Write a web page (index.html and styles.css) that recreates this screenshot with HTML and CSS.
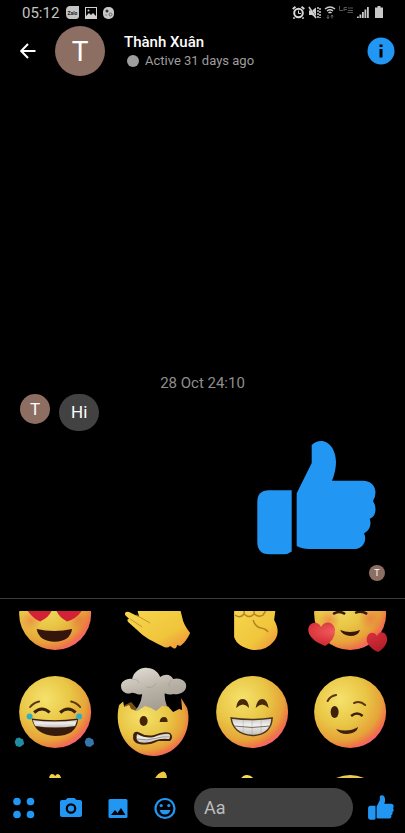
FILE: index.html
```html
<!DOCTYPE html>
<html lang="en">
<head>
<meta charset="utf-8">
<meta name="viewport" content="width=device-width, initial-scale=1">
<title>Thành Xuân</title>
<link rel="stylesheet" href="styles.css">
</head>
<body>
<svg class="defs" width="0" height="0" aria-hidden="true">
  <defs>
    <radialGradient id="face" cx="0.36" cy="0.32" r="0.72">
      <stop offset="0" stop-color="#f5e26c"/>
      <stop offset="0.5" stop-color="#e9c645"/>
      <stop offset="0.8" stop-color="#e6a339"/>
      <stop offset="0.95" stop-color="#f0704a"/>
      <stop offset="1" stop-color="#f9627a"/>
    </radialGradient>
    <linearGradient id="hand" x1="0" y1="0" x2="1" y2="1">
      <stop offset="0" stop-color="#f6d850"/>
      <stop offset="0.65" stop-color="#f0c53b"/>
      <stop offset="1" stop-color="#ef8a3c"/>
    </linearGradient>
    <radialGradient id="blush">
      <stop offset="0" stop-color="#ec6044" stop-opacity="0.5"/>
      <stop offset="1" stop-color="#ec6044" stop-opacity="0"/>
    </radialGradient>
    <radialGradient id="heart" cx="0.35" cy="0.3" r="0.8">
      <stop offset="0" stop-color="#f0605c"/>
      <stop offset="0.5" stop-color="#d7303a"/>
      <stop offset="1" stop-color="#b51f2b"/>
    </radialGradient>
    <linearGradient id="cloud" gradientUnits="userSpaceOnUse" x1="40" y1="5" x2="52" y2="48">
      <stop offset="0" stop-color="#dcd7ce"/>
      <stop offset="0.5" stop-color="#b9b2a7"/>
      <stop offset="1" stop-color="#a39b8e"/>
    </linearGradient>
    <linearGradient id="teeth" x1="0" y1="0" x2="0" y2="1">
      <stop offset="0" stop-color="#c9c6c2"/>
      <stop offset="0.4" stop-color="#f1efec"/>
      <stop offset="1" stop-color="#c4c0bb"/>
    </linearGradient>
    <symbol id="thumb" viewBox="0 0 120 114">
      <path d="M12 49.300H34.700V110.500Q31 113.300 27 113.300H12Q.3 113 .3 101V61Q.3 49.300 12 49.300Z"/>
      <path d="M39.700 52.300L54.700 22V4Q59 0 64 0C73 0 79 10 79 20.700Q79 30 75 39.700H106C114 39.700 118.500 45 118.500 51.500Q118.500 56 116 60Q118.700 64 118.500 68.500C118.300 74 116 76.500 112.700 77.700C115 84 112 90 107 92.300C110.500 99 106 108 98 108H52Q45 108 39.700 105Z"/>
    </symbol>
  </defs>
</svg>

<div class="status">
  <span class="status-time">05:12</span>
  <svg class="note-icon" width="13" height="13" viewBox="0 0 13 13"><path d="M3 0H13V10Q13 13 10 13H3Q0 12 0 8V4Q0 1 3 0Z" fill="#c4c4c4"/><text x="6.500" y="8.500" class="zalo">Zalo</text></svg>
  <svg class="note-icon" width="12" height="12" viewBox="0 0 12 12"><path fill="#d0d0d0" fill-rule="evenodd" d="M0 0H12V12H0ZM1 1V9L4 6L6 8L8 6L11 9V1Z"/><circle cx="3.500" cy="3.500" r="1" fill="#d0d0d0"/></svg>
  <svg class="note-icon" width="11" height="12" viewBox="0 0 11 12"><rect width="11" height="12" rx="5" fill="#c8c8c8"/><circle cx="4" cy="4" r="1.500" fill="#333"/><circle cx="7.500" cy="7.500" r="1.500" fill="none" stroke="#666"/><circle cx="3" cy="8" r="1" fill="#999"/></svg>
  <div class="status-right">
    <svg width="13" height="13" viewBox="0 0 13 13" fill="none" stroke="#d8d8d8"><circle cx="6.500" cy="7" r="4.300" stroke-width="2"/><path stroke-width="1.800" d="M.7 3L3.500 .8M12.300 3L9.500 .8M2.500 11.500L1.500 12.700M10.500 11.500L11.500 12.700"/><path d="M6.500 4.500V7.500H9"/></svg>
    <svg width="13" height="13" viewBox="0 0 13 13"><path fill="#d0d0d0" d="M1 4.500H4L8 1.500V12L4 9H1Z"/><path d="M2 1.500L9 12.500" stroke="#000"/><path d="M1 1L8 12" stroke="#d0d0d0" stroke-width="1.500"/><path d="M10 1V12M12 2V12" stroke="#c8c8c8" stroke-width="1.500" stroke-dasharray="2 1"/></svg>
    <svg width="12" height="13" viewBox="0 0 12 13" fill="none" stroke="#d0d0d0"><path stroke-width="1.300" d="M1 3Q6 -1 11 3M3 5Q6 2.500 9 5M4.500 7Q6 5.500 7.500 7"/><path stroke="#666" d="M4 9V12.500M2.800 11L4 12.500L5.200 11M8 12.500V9M6.800 10.500L8 9L9.200 10.500"/></svg>
    <svg width="15" height="13" viewBox="0 0 15 13" fill="none" stroke="#555"><path d="M.5 0V4.500H4M5 5V1.500H8M5 3.500H8M9 2H14M9 4.500H14M8.500 6.500H14"/></svg>
    <svg width="12" height="13" viewBox="0 0 12 13"><path fill="#c8c8c8" d="M0 10.500H1.800V12H0ZM2.500 8.500H4.300V12H2.500ZM5 6H6.800V12H5ZM7.500 3.500H9.300V12H7.500ZM10 1H11.800V12H10Z"/></svg>
    <svg class="battery" width="8" height="13" viewBox="0 0 8 13"><path fill="#c8c8c8" d="M2.500 0H5.500V1.500H8V12H0V1.500H2.500Z"/></svg>
  </div>
</div>

<header class="header">
  <button class="icon-btn" aria-label="Back"><svg width="16" height="16" viewBox="0 0 16 16" fill="none" stroke="#fff" stroke-width="2"><path d="M15.500 8H1.500M8 1L1.200 8L8 15"/></svg></button>
  <span class="avatar avatar-lg">T</span>
  <div class="who">
    <h1 class="name">Thành Xuân</h1>
    <p class="active"><span class="dot"></span>Active 31 days ago</p>
  </div>
  <button class="icon-btn info" aria-label="Conversation info"><svg width="28" height="28" viewBox="0 0 28 28"><circle cx="14" cy="14" r="13.500" fill="#2196f3"/><path fill="#000" d="M12.500 7.500H15.500V10H12.500ZM12.500 12H15.500V20.500H12.500Z"/></svg></button>
</header>

<main class="chat">
  <time class="date">28 Oct 24:10</time>
  <div class="received">
    <span class="avatar avatar-md">T</span>
    <p class="bubble">Hi</p>
  </div>
  <svg class="big-thumb" width="120" height="114" role="img" aria-label="Thumbs up"><use href="#thumb"/></svg>
  <span class="avatar avatar-sm">T</span>
</main>

<section class="tray" aria-label="Stickers">
  <div class="tray-view">
    <div class="stickers">
      <svg viewBox="0 0 98 98"><circle cx="49" cy="49" r="36" fill="url(#face)"/><circle cx="25" cy="55" r="11" fill="url(#blush)"/><circle cx="73" cy="55" r="11" fill="url(#blush)"/><path fill="#d32233" d="M18 40H47Q46 51 34 56.500Q25 53 18 40ZM49 40H79Q73 53 61 56.500Q50 51 49 40Z"/><path fill="#35150b" d="M30.500 64Q48 68 66 64Q64 76.500 48.500 76.700Q33 76.500 30.500 64Z"/></svg>
      <svg viewBox="0 0 98 98"><path fill="url(#hand)" d="M33 44H76L78 52Q79 59 86 68Q82 77 76 81L73 80Q72 85 69 83L66 81Q63 84 58 81C48 76 41 73 33 65L24 57Q22 54 25 54L21 50Q20 46 25 47L35 52Z"/><path d="M26 54L38 62M32 50L46 58" fill="none" stroke="#c9942a"/></svg>
      <svg viewBox="0 0 98 98"><path fill="url(#hand)" d="M31 40H73L71 55Q78 67 71 76Q63 86 50 85Q34 82 31 72Z"/><path fill="none" stroke="#b58325" stroke-width="1.500" d="M32 50Q37 54 41 49Q46 54 51 49Q56 53 60 50M41 49V45M51 49V45M60 50L63 45"/><path fill="none" stroke="#b58325" stroke-width="1.500" d="M50 55Q52 62 58 63Q63 64 65 67"/></svg>
      <svg viewBox="0 0 98 98"><circle cx="49" cy="49" r="36" fill="url(#face)"/><circle cx="28" cy="55" r="11" fill="url(#blush)"/><circle cx="69" cy="53" r="12" fill="url(#blush)"/><path d="M32 49Q38 45 44 49M54 48Q60 45 66 49" fill="none" stroke="#35180b" stroke-width="2.500"/><path fill="#35180b" d="M39 65Q49 69 59 65Q57 71 49 71Q41 70 39 65Z"/><path fill="url(#heart)" d="M20 62C16 54 4 58 8 69Q11 76 24 81Q34 75 34 65C33 56 23 55 20 62ZM76 71C71 63 62 71 67 79Q70 84 77 87Q84 83 86 76C87 67 78 64 76 71Z"/></svg>

      <svg viewBox="0 0 98 98"><circle cx="49" cy="49" r="36" fill="url(#face)"/><path fill="none" stroke="#59380e" stroke-width="2" stroke-linecap="round" d="M24 44Q27 40 33 38.500M65 38.500Q71 40 74 44"/><path fill="none" stroke="#3b200b" stroke-width="3" d="M28 49.500Q36 42.500 43.500 49.500M54 49.500Q62 42.500 69.500 49.500"/><path fill="#381b0c" d="M25.500 55.500Q48 59 72 55.500Q71 73 49 73Q29 72 25.500 55.500Z"/><path fill="url(#teeth)" d="M26.500 57Q48 60 71 57L69 63Q49 66 29 63Z"/><circle cx="23.500" cy="53.500" r="3" fill="#35adc0"/><circle cx="73" cy="53.500" r="3" fill="#35adc0"/><path fill="#208da2" d="M13 74.500L17 76.500L18 81L14 84L10 83L8.500 79L10 75.500Z"/><path fill="#3676ab" d="M83 74.500L87 76.500L88 81L84 84L80 83L78.500 79L80 75.500Z"/></svg>
      <svg viewBox="0 0 98 98"><path fill="#775017" d="M19 43L27 39L34 47H27Z"/><path fill="url(#cloud)" d="M38 27H61Q59 36 65 48H31Q39 38 38 27Z"/><path fill="url(#cloud)" d="M28 16C30 8 37 4 43 5C51 5 55 11 56 14C62 10 67 12 69 16C76 14 83 18 82 24C81 30 74 32 69 31C63 33 60 29 57 30C51 36 44 33 40 30C34 34 31 29 27 30C22 32 17 28 17 24C16 19 22 15 28 16Z"/><path fill="none" stroke="#97918a" stroke-opacity="0.5" d="M27 17Q33 15 35 20M42 24Q49 26 52 20M68 17Q63 20 66 24"/><path fill="url(#face)" d="M19 38.500L20 44L25 42L27 46L33 48L41 43L47 45L52 48L58 43L64 43.500L69 49L75 46L78 47L77 35L80 40L83 45C89 66 75 93 49 93C22 92 9 65 15 42Z"/><ellipse cx="39.500" cy="58" rx="4" ry="5" fill="#472607"/><path fill="#472607" d="M55.500 59Q56 54 60 54Q63.500 54 63.500 59Z"/><path fill="#3c210d" d="M29 72Q30 68 34 69Q42 74 50 72Q60 68 66 70Q70 74 66 78Q60 78 54 78Q45 83 35 81Q28 80 29 72Z"/><path fill="url(#teeth)" d="M33 71Q42 76 50 74Q60 70 65 71Q67 73 65 76Q58 75 52 77Q43 81 35 79Q31 76 33 71Z"/><path stroke="#9b948b" fill="none" d="M33 76Q43 78 51 75.500Q59 73 66 74"/></svg>
      <svg viewBox="0 0 98 98"><circle cx="49" cy="49" r="36" fill="url(#face)"/><path fill="#492907" d="M33 45Q34 36 39.500 36Q45 36 46 45Q40 38 33 45ZM52.500 45Q54 36 59 36Q64 36 65.500 45Q59 38 52.500 45Z"/><path fill="url(#teeth)" stroke="#4c351f" stroke-width="1.500" d="M28 55Q49 58 69 55Q68 72 49 72.500Q30 71 28 55Z"/><path fill="none" stroke="#77706a" d="M31 63Q49 66 67 63"/><path fill="none" stroke="#77706a" stroke-opacity="0.25" d="M40 57V71M49 57V72M58 57V71"/></svg>
      <svg viewBox="0 0 98 98"><circle cx="49" cy="49" r="36" fill="url(#face)"/><path fill="none" stroke="#593513" stroke-width="2" stroke-linecap="round" d="M26.500 38Q29 33 35 32M53 40Q59 37.500 64 42"/><ellipse cx="33.500" cy="49" rx="4" ry="6" fill="#3e210d"/><path fill="none" stroke="#3e210d" stroke-width="2.500" d="M50 53Q56 48 61.500 53"/><path fill="#3e210d" d="M35 66Q47 70 57 64Q56 70 46 71Q38 71 35 66Z"/></svg>

      <svg viewBox="0 0 98 98"><path fill="#efcf4d" d="M42.500 20Q43 13 46 13Q48 13 49 15Q50 13 52 13Q55 14 55.500 20Z"/></svg>
      <svg viewBox="0 0 98 98"><path fill="#efc845" d="M50 19Q53 12 59 10.500Q63 11 63 20H50Z"/></svg>
      <svg viewBox="0 0 98 98"><path fill="#f5dc5a" d="M36 20Q40 13 44 14Q49 14 52 20Z"/></svg>
      <svg viewBox="0 0 98 98"><circle cx="49" cy="49" r="35" fill="#e9ca52"/></svg>
    </div>
  </div>
</section>

<footer class="composer">
  <div class="tools">
    <button class="icon-btn" aria-label="More apps"><svg width="24" height="24" viewBox="0 0 24 24" fill="#2196f3"><circle cx="5" cy="5.500" r="3.800"/><circle cx="18.500" cy="5.500" r="3.800"/><circle cx="5" cy="18.500" r="3.800"/><circle cx="18.500" cy="18.500" r="3.800"/></svg></button>
    <button class="icon-btn" aria-label="Camera"><svg width="24" height="24" viewBox="0 0 24 24"><path fill="#2196f3" d="M8.500 2H15.500L17.500 4H21Q23 4 23 6V19Q23 21 21 21H3Q1 21 1 19V6Q1 4 3 4H6.500Z"/><circle cx="12" cy="12.500" r="4.200" fill="#2196f3" stroke="#000" stroke-width="2.200"/></svg></button>
    <button class="icon-btn" aria-label="Gallery"><svg width="24" height="24" viewBox="0 0 24 24"><rect x="2.500" y="3" width="19" height="19" rx="1.500" fill="#2196f3"/><path d="M5 19L9 14L11.500 17L15 12L19.500 19Z"/></svg></button>
    <button class="icon-btn" aria-label="Stickers"><svg width="24" height="24" viewBox="0 0 24 24"><circle cx="12" cy="12.500" r="9.500" fill="none" stroke="#2196f3" stroke-width="2.200"/><circle cx="8.200" cy="9.500" r="1.600" fill="#2196f3"/><circle cx="15.800" cy="9.500" r="1.600" fill="#2196f3"/><path fill="#2196f3" d="M6.500 14H17.500Q16 18.500 12 18.500Q8 18.500 6.500 14Z"/></svg></button>
  </div>
  <input class="field" type="text" placeholder="Aa" aria-label="Message">
  <button class="icon-btn" aria-label="Send thumbs up"><svg width="26" height="25" fill="#2196f3"><use href="#thumb"/></svg></button>
</footer>
</body>
</html>
```

FILE: styles.css
```css
* {
  box-sizing: border-box;
}

body {
  margin: 0;
  min-height: 100vh;
  display: flex;
  flex-direction: column;
  background: #000;
  color: #fff;
  font-family: Roboto, "Liberation Sans", sans-serif;
}

h1,
p {
  margin: 0;
}

svg {
  display: block;
}

.defs {
  position: absolute;
}

.icon-btn {
  display: flex;
  flex: none;
  padding: 0;
  border: 0;
  background: none;
  cursor: pointer;
}

/* Status bar */
.status {
  display: flex;
  align-items: center;
  height: 25px;
  padding: 0 22px;
}

.status-time {
  margin-right: 7px;
  color: #c4c4c4;
  font-size: 15px;
  line-height: 26px;
}

.note-icon {
  margin-right: 6px;
}

.zalo {
  fill: #222;
  font-size: 5px;
  font-weight: 700;
  text-anchor: middle;
}

.status-right {
  display: flex;
  align-items: center;
  gap: 3px;
  margin-left: auto;
}

.battery {
  margin-left: 3px;
}

/* Header */
.header {
  display: flex;
  align-items: center;
  height: 52px;
  padding: 0 10px 0 20px;
}

.avatar {
  display: flex;
  flex: none;
  align-items: center;
  justify-content: center;
  border-radius: 50%;
  background: #8d6e63;
}

.avatar-lg {
  width: 50px;
  height: 50px;
  margin: 0 19px;
  font-size: 28px;
}

.avatar-md {
  width: 30px;
  height: 30px;
  font-size: 17px;
}

.avatar-sm {
  align-self: flex-end;
  width: 16px;
  height: 16px;
  margin-top: 10px;
  font-size: 9px;
}

.name {
  font-size: 15px;
  font-weight: 500;
  line-height: 20px;
}

.active {
  display: flex;
  align-items: center;
  color: #9e9e9e;
  font-size: 13px;
  line-height: 18px;
}

.dot {
  width: 12px;
  height: 12px;
  margin: 0 6px 0 3px;
  border-radius: 50%;
  background: #9e9e9e;
}

.info {
  margin-left: auto;
}

/* Conversation */
.chat {
  display: flex;
  flex: 1;
  flex-direction: column;
  justify-content: flex-end;
  padding: 0 20px 17px;
}

.date {
  margin-bottom: 1px;
  color: #8e8e8e;
  font-size: 15px;
  line-height: 20px;
  text-align: center;
}

.received {
  display: flex;
  align-items: flex-start;
  gap: 9px;
  margin-bottom: 10px;
}

.bubble {
  padding: 8px 12px;
  border-radius: 19px;
  background: #424242;
  font-size: 17px;
  line-height: 21px;
}

.big-thumb {
  align-self: flex-end;
  margin-right: 8px;
  fill: #2196f3;
}

/* Sticker tray */
.tray {
  padding: 12px 6px 0;
  border-top: 1px solid #3c3c3c;
}

.tray-view {
  height: 167px;
  overflow: hidden;
}

.stickers {
  display: grid;
  grid-template-columns: repeat(4, 1fr);
  grid-auto-rows: 98px;
  margin-top: -46px;
}

.stickers svg {
  width: 100%;
  height: 98px;
}

/* Composer */
.composer {
  display: flex;
  align-items: center;
  padding: 10px 11px 6px 12px;
}

.tools {
  display: flex;
  gap: 23px;
}

.field {
  flex: 1;
  min-width: 0;
  height: 39px;
  margin: 0 15px 0 17px;
  padding: 0 10px;
  border: 0;
  border-radius: 20px;
  background: #424242;
  color: #fff;
  font: 18px/24px Roboto, "Liberation Sans", sans-serif;
}

.field::placeholder {
  color: #bdbdbd;
  opacity: 1;
}
```
